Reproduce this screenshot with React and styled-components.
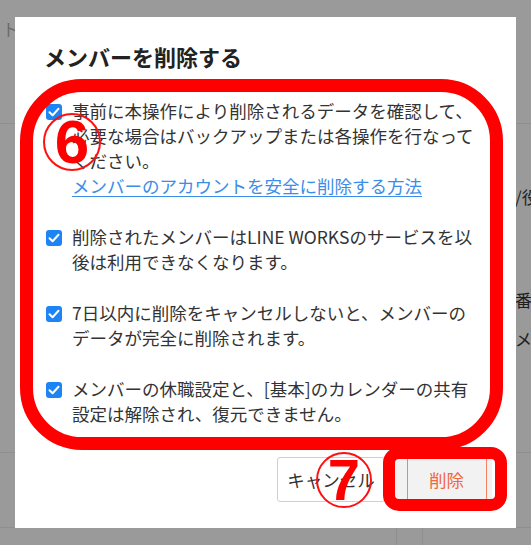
import React from 'react';
import styled, { createGlobalStyle } from 'styled-components';

const GlobalStyle = createGlobalStyle`
  html, body {
    margin: 0;
    padding: 0;
    background: #9a9a9a;
  }
  body {
    font-family: "Noto Sans CJK JP", "Noto Sans", sans-serif;
  }
`;

const Screen = styled.div`
  position: relative;
  width: 531px;
  height: 545px;
  overflow: hidden;
  background: #9a9a9a;
`;

/* dimmed page behind the modal */
const BackPage = styled.div`
  display: flex;
  flex-direction: column;
  height: 100%;
  color: #1e1e1e;
  font-size: 17px;
`;

const BackRow = styled.div`
  display: flex;
  justify-content: space-between;
  box-sizing: border-box;
  height: ${p => p.$h}px;
  border-bottom: 1px solid #8f8f8f;
  padding: ${p => p.$pad || '0'};
`;

const BackText = styled.span`
  color: ${p => p.$dim ? '#6a6a6a' : '#1e1e1e'};
  line-height: 1;
  white-space: nowrap;
`;

const BackColumn = styled.div`
  display: flex;
  flex-direction: column;
  align-items: flex-start;
  width: 16px;
  overflow: hidden;
  padding-top: 64px;
`;

const BottomCells = styled.div`
  display: flex;
  flex: 1;
`;

const Cell = styled.div`
  width: ${p => p.$w}px;
  border-right: ${p => p.$line ? '1px solid #8f8f8f' : 'none'};
  flex: ${p => p.$grow ? 1 : 'none'};
`;

const Dialog = styled.div`
  position: absolute;
  left: 15px;
  top: 17px;
  width: 501px;
  height: 511px;
  box-sizing: border-box;
  background: #fff;
  padding: 25px 30px 0 30px;
  display: flex;
  flex-direction: column;
`;

const Title = styled.h2`
  margin: 0 0 0 -1px;
  font-size: 22px;
  line-height: 28px;
  font-weight: 700;
  color: #222;
`;

const List = styled.ul`
  list-style: none;
  margin: 28px 0 0 0;
  padding: 0;
  display: flex;
  flex-direction: column;
  gap: 26px;
`;

const Item = styled.li`
  display: flex;
  align-items: flex-start;
  gap: 10px;
  font-size: 17.5px;
  line-height: 25px;
  color: #333;
`;

const Lines = styled.div`
  display: flex;
  flex-direction: column;
  white-space: nowrap;
`;

const Box = styled.span`
  flex: none;
  width: 16px;
  height: 16px;
  margin-top: 6px;
  margin-left: 1px;
  border-radius: 3px;
  background: #1d84f6;
  display: flex;
  align-items: center;
  justify-content: center;
`;

const Link = styled.a`
  color: #3a8de8;
  text-decoration: underline;
  text-underline-offset: 3px;
  text-decoration-thickness: 1px;
`;

const Footer = styled.div`
  display: flex;
  justify-content: flex-end;
  gap: 10px;
  margin-top: auto;
  margin-bottom: 26px;
  margin-right: -6px;
`;

const Button = styled.button`
  height: 45px;
  box-sizing: border-box;
  padding: 0;
  width: ${p => p.$w}px;
  font-family: inherit;
  font-size: 17.5px;
  border-radius: 3px;
  border: 1px solid ${p => p.$danger ? '#f3f3f3' : '#cfcfcf'};
  background: ${p => p.$danger ? '#f2f2f2' : '#fff'};
  color: ${p => p.$danger ? '#f0663f' : '#333'};
  position: relative;
  text-indent: ${p => p.$danger ? '6px' : '0'};
  &::before {
    content: ${p => p.$danger ? '""' : 'none'};
    position: absolute;
    top: 0;
    bottom: 0;
    left: 11px;
    right: 4px;
    border-left: 1px solid #f5835f;
    border-right: 1px solid #f5835f;
  }
`;

/* annotation marks drawn over the dialog */
const Ring = styled.div`
  position: absolute;
  left: ${p => p.$x}px;
  top: ${p => p.$y}px;
  width: ${p => p.$w}px;
  height: ${p => p.$h}px;
  box-sizing: border-box;
  border: ${p => p.$b}px solid #ff0000;
  border-radius: ${p => p.$r};
  pointer-events: none;
`;

const Marker = styled.div`
  position: absolute;
  left: ${p => p.$x}px;
  top: ${p => p.$y}px;
  width: ${p => p.$d}px;
  height: ${p => p.$d}px;
  box-sizing: border-box;
  border: 2px solid #ff1010;
  border-radius: 50%;
  display: flex;
  align-items: center;
  justify-content: center;
  font-family: "Liberation Sans Narrow", "Liberation Sans", Arial, sans-serif;
  font-weight: 700;
  font-size: ${p => p.$fs}px;
  color: #ff0000;
  line-height: 1;
`;

const Check = () => (
  <svg width="12" height="10" viewBox="0 0 12 10">
    <path d="M1.5 5.2 L4.6 8.2 L10.5 1.8" fill="none" stroke="#fff" strokeWidth="2" strokeLinecap="round" strokeLinejoin="round" />
  </svg>
);

const items = [
  {
    lines: ['事前に本操作により削除されるデータを確認して、', '必要な場合はバックアップまたは各操作を行なって', 'ください。'],
    link: 'メンバーのアカウントを安全に削除する方法',
  },
  { lines: ['削除されたメンバーはLINE WORKSのサービスを以', '後は利用できなくなります。'] },
  { lines: ['7日以内に削除をキャンセルしないと、メンバーの', 'データが完全に削除されます。'] },
  { lines: ['メンバーの休職設定と、[基本]のカレンダーの共有', '設定は解除され、復元できません。'] },
];

export default function App() {
  return (
    <Screen>
      <GlobalStyle />
      <BackPage>
        <BackRow $h={124} $pad="20px 0 0 2px">
          <BackText $dim>ト</BackText>
        </BackRow>
        <BackRow $h={329}>
          <span />
          <BackColumn>
            <BackText>/役</BackText>
            <BackText style={{ marginTop: 86 }}>番</BackText>
            <BackText style={{ marginTop: 22 }}>メ</BackText>
          </BackColumn>
        </BackRow>
        <BackRow $h={75} />
        <BottomCells>
          <Cell $w={396} $line />
          <Cell $w={25} $line />
          <Cell $grow />
        </BottomCells>
      </BackPage>

      <Dialog>
        <Title>メンバーを削除する</Title>
        <List>
          {items.map((it, i) => (
            <Item key={i}>
              <Box><Check /></Box>
              <Lines>
                {it.lines.map(l => <span key={l}>{l}</span>)}
                {it.link && <span><Link href="#">{it.link}</Link></span>}
              </Lines>
            </Item>
          ))}
        </List>
        <Footer>
          <Button $w={108}>キャンセル</Button>
          <Button $w={97} $danger>削除</Button>
        </Footer>

        <Ring $x={5} $y={62} $w={483} $h={371} $b={13} $r="62px" />
        <Marker $x={28} $y={96} $d={58} $fs={62}>6</Marker>
        <Marker $x={301} $y={435} $d={56} $fs={58}>7</Marker>
        <Ring $x={368} $y={430} $w={124} $h={64} $b={12} $r="16px" />
      </Dialog>
    </Screen>
  );
}
